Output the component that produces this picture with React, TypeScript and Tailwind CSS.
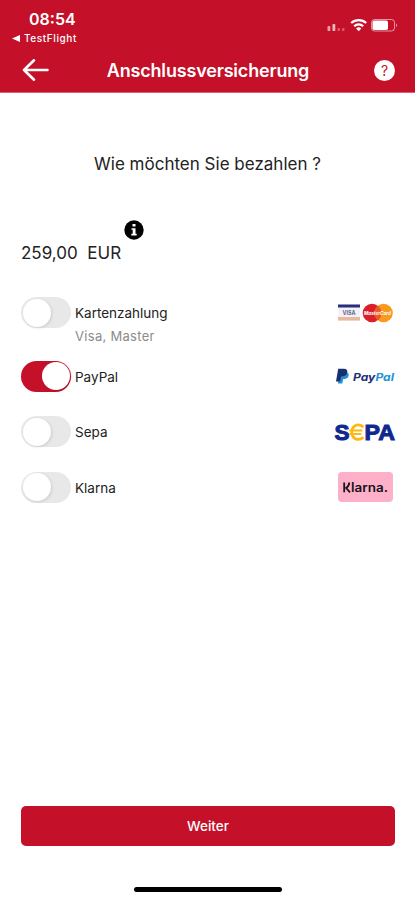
import { useState } from "react";
import type { ReactNode } from "react";

type Method = {
  id: string;
  label: string;
  hint?: string;
  logo: ReactNode;
};

const CardLogos = () => (
  <svg width="60" height="22" viewBox="0 0 60 22">
    <rect x="3" y="2.5" width="22" height="16.5" fill="#f4f2f5" />
    <rect x="3" y="2.5" width="22" height="3" fill="#26307f" />
    <rect x="3" y="15" width="22" height="3.5" fill="#e6b9a0" />
    <text
      x="7.5"
      y="13"
      fontSize="6"
      fontWeight="700"
      textLength="13"
      lengthAdjust="spacingAndGlyphs"
      fill="#5f6796"
    >
      VISA
    </text>
    <circle cx="48.5" cy="11" r="9.3" fill="#f99a1c" />
    <circle cx="37" cy="11" r="9.3" fill="#d9202b" />
    <path d="M42.7 3.7a9.3 9.3 0 0 1 0 14.6a9.3 9.3 0 0 1 0-14.6" fill="#ea5b25" />
    <text
      x="29"
      y="13"
      fontSize="5"
      fontWeight="700"
      fontStyle="italic"
      textLength="27"
      lengthAdjust="spacingAndGlyphs"
      fill="#fff"
    >
      MasterCard
    </text>
  </svg>
);

const PayPalLogo = () => (
  <svg width="60" height="18" viewBox="0 0 60 18">
    <path
      d="M4.5 5h6c3 .3 3.9 2.3 2.9 4.6c-.9 2-2.8 2.500-5.200 2.500l-.9 4.400H3z"
      fill="#2790d3"
    />
    <path
      d="M3.2 1.700h5.600c3 0 4.100 1.800 3.300 4.200c-.8 2.700-2.900 3.500-6 3.500L5 14.500H1z"
      fill="#18306f"
    />
    <text
      x="18"
      y="13.8"
      fontSize="11"
      fontWeight="700"
      fontStyle="italic"
      textLength="41"
      lengthAdjust="spacingAndGlyphs"
    >
      <tspan fill="#1f2f78">Pay</tspan>
      <tspan fill="#2393d4">Pal</tspan>
    </text>
  </svg>
);

const SepaLogo = () => (
  <svg
    className="-mr-0.5"
    width="64"
    height="28"
    viewBox="0 0 64 28"
    fontFamily="Liberation Sans, Arial, sans-serif"
    fontWeight="700"
    fontSize="21.5"
    fill="#10298e"
    stroke="#10298e"
    strokeWidth="1"
  >
    <text x="1.5" y="22" textLength="15" lengthAdjust="spacingAndGlyphs">
      S
    </text>
    <g fill="none" stroke="#fdb913" strokeWidth="2.8">
      <path d="M30.500 9C25 4.800 18.800 7.600 18.800 14.200s6.200 9.400 11.700 5.200" />
      <path d="M16.3 12.500h13M16.300 16h12" strokeWidth="1.900" />
    </g>
    <text x="31.5" y="22" textLength="30.5" lengthAdjust="spacingAndGlyphs">
      PA
    </text>
  </svg>
);

const KlarnaLogo = () => (
  <svg width="55" height="30" viewBox="0 0 55 30">
    <rect width="55" height="30" rx="4" fill="#feb0c8" />
    <g fill="none" stroke="#17131a" strokeWidth="1.8">
      <path d="M6.2 10.500v9.800M11.200 10.500c0 2.700-1.100 4.300-3 5.500l3.800 4.300" />
    </g>
    <text
      x="13"
      y="20.3"
      fontSize="12.5"
      fontWeight="600"
      textLength="37"
      lengthAdjust="spacingAndGlyphs"
      fill="#17131a"
    >
      larna.
    </text>
  </svg>
);

const methods: Method[] = [
  { id: "card", label: "Kartenzahlung", hint: "Visa, Master", logo: <CardLogos /> },
  { id: "paypal", label: "PayPal", logo: <PayPalLogo /> },
  { id: "sepa", label: "Sepa", logo: <SepaLogo /> },
  { id: "klarna", label: "Klarna", logo: <KlarnaLogo /> },
];

const Toggle = ({ on, onClick }: { on: boolean; onClick: () => void }) => (
  <button
    type="button"
    role="switch"
    aria-checked={on}
    onClick={onClick}
    className={`flex h-[31px] w-[50px] shrink-0 items-center rounded-full p-[1.5px] ${
      on ? "justify-end bg-[#c51029]" : "justify-start bg-[#e8e8e8]"
    }`}
  >
    <span className="size-7 rounded-full bg-white shadow-[1px_1px_3px_rgba(0,0,0,0.12)]" />
  </button>
);

const StatusIcons = () => (
  <svg width="72" height="16" viewBox="0 0 72 16" fill="#fff">
    <rect x="1.5" y="9" width="2.8" height="5" rx="0.8" opacity="0.6" />
    <rect x="6.5" y="7" width="2.8" height="7" rx="0.8" opacity="0.7" />
    <rect x="11.5" y="11" width="2.5" height="3" rx="0.8" opacity="0.3" />
    <rect x="16" y="11" width="2.5" height="3" rx="0.8" opacity="0.3" />
    <g transform="translate(1.2 0.3)">
      <g fill="none" stroke="#fff" strokeWidth="2.2">
        <path d="M24 5.700a11 11 0 0 1 15 0" />
        <path d="M27 8.900a6.500 6.500 0 0 1 9 0" />
      </g>
      <path d="M28.900 11.300a3.700 3.700 0 0 1 5.200 0L31.500 14z" />
    </g>
    <rect x="45.5" y="2.5" width="23" height="11.5" rx="3" fill="none" stroke="#fff" strokeOpacity="0.55" />
    <rect x="46.5" y="3.5" width="15.5" height="9.5" rx="1.8" />
    <path d="M70 6.500v3.500c1.400-.6 1.400-2.900 0-3.500" opacity="0.6" />
  </svg>
);

const App = () => {
  const [selected, setSelected] = useState("paypal");

  return (
    <main className="flex h-[900px] w-full flex-col bg-white font-['Inter',sans-serif] text-[#222]">
      {/* Header */}
      <header className="flex h-[93px] shrink-0 flex-col border-b border-[#d96070] bg-[#c51029] text-white">
        <div className="flex h-12 justify-between pt-2.5 pr-[17px] pl-3">
          <div>
            <p className="pl-[17px] text-[16px] leading-[18px] font-semibold">08:54</p>
            <p className="flex items-center gap-1 pt-[3px] text-[10px] leading-[15px] font-medium tracking-[0.6px]">
              <svg width="8" height="7" viewBox="0 0 8 7" fill="currentColor">
                <path d="M0 3.500L8 0v7z" />
              </svg>
              TestFlight
            </p>
          </div>
          <div className="pt-[7px]">
            <StatusIcons />
          </div>
        </div>
        <div className="grid h-11 grid-cols-[28px_1fr_22px] items-center pr-[19px] pl-[22px]">
          <svg
            width="28"
            height="24"
            viewBox="0 0 28 24"
            fill="none"
            stroke="currentColor"
            strokeWidth="2.6"
            strokeLinecap="round"
            strokeLinejoin="round"
          >
            <path d="M25.500 12H2M12 2.300L2 12l10 9.700" />
          </svg>
          <h1 className="pr-2 text-center text-[18px] font-semibold tracking-[-0.18px]">
            Anschlussversicherung
          </h1>
          <span className="flex size-[21px] items-center justify-center rounded-full bg-white text-[14px] text-[#c51029]">
            ?
          </span>
        </div>
      </header>

      <h2 className="pt-[59px] text-center text-[17px] leading-6">Wie möchten Sie bezahlen ?</h2>

      {/* Amount */}
      <div className="mt-[35px] flex h-[54px] items-end pl-[21px]">
        <p className="w-[103px] text-[17px] leading-6 whitespace-pre">259,00  EUR</p>
        <svg className="mb-[25px]" width="20" height="20" viewBox="0 0 20 20">
          <circle cx="10" cy="10" r="9.7" fill="#000" />
          <path d="M8.500 3.900h3v2.700h-3zM7.500 8.200h4v5.600h1.200v1.700H7.300v-1.700h1.400V9.800H7.500z" fill="#fff" />
        </svg>
      </div>

      {/* Payment methods */}
      <div className="flex flex-col gap-[24.5px] pt-8 pr-5 pl-[21px]">
        {methods.map((method) => (
          <div key={method.id}>
            <div className="flex h-[31px] items-center">
              <Toggle on={selected === method.id} onClick={() => setSelected(method.id)} />
              <span className="pt-[2px] pl-1 text-[13.5px]">{method.label}</span>
              <span className={`ml-auto ${method.id === "klarna" ? "pr-0.5" : ""}`}>
                {method.logo}
              </span>
            </div>
            {method.hint && (
              <p className="h-2 pl-[54px] text-[13px] leading-4 tracking-[0.3px] text-[#8b8b8b]">
                {method.hint}
              </p>
            )}
          </div>
        ))}
      </div>

      {/* Footer */}
      <footer className="mt-auto flex h-[94px] flex-col items-center pr-5 pl-[21px]">
        <button
          type="button"
          className="h-10 w-full rounded-[5px] bg-[#c51029] text-[13.5px] font-medium text-white"
        >
          Weiter
        </button>
        <span className="mt-[41px] h-[5px] w-[148px] rounded-full bg-black" />
      </footer>
    </main>
  );
};

export default App;
